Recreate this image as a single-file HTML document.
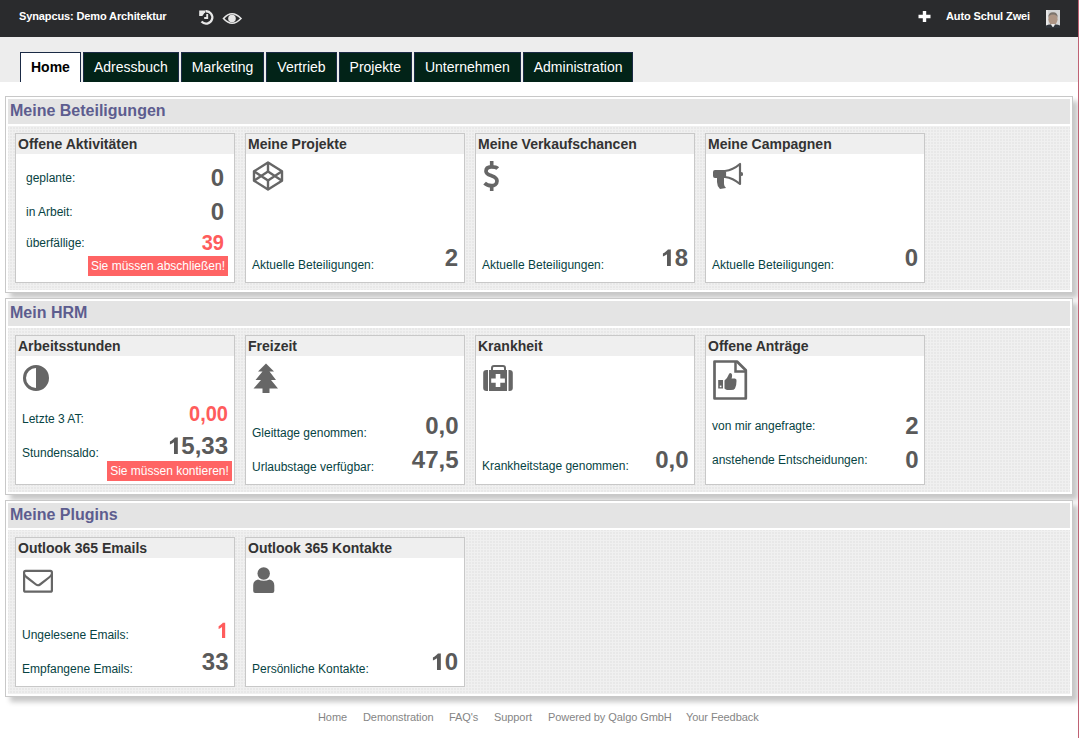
<!DOCTYPE html>
<html><head><meta charset="utf-8"><style>
html,body{margin:0;padding:0;width:1079px;height:738px;overflow:hidden;background:#fff;font-family:"Liberation Sans",sans-serif;}
.t{position:absolute;white-space:nowrap;}
.tabs{position:absolute;left:20px;top:52px;display:flex;}
.tab{box-sizing:border-box;height:30px;border:1px solid #1a2a45;border-bottom:none;background:#022318;color:#fff;font-size:14px;line-height:29px;padding:0 10px;margin-right:2px;white-space:nowrap;}
.tab.act{background:#fff;color:#000;font-weight:bold;}
.one{position:relative;color:transparent;}
.one svg{position:absolute;left:0;top:1px;width:0.556em;height:0.905em;}
.badge{position:absolute;background:#ff6464;color:#fff;font-size:12px;text-align:center;white-space:nowrap;}
</style></head><body>
<div style="position:absolute;left:0px;top:0px;width:1079px;height:37px;background:#2a2b2d"></div>
<div class="t" style="left:19px;top:10.69px;font-size:11px;line-height:11px;font-weight:bold;color:#ffffff;letter-spacing:-0.12px">Synapcus: Demo Architektur</div>
<div class="t" style="left:946px;top:10.69px;font-size:11px;line-height:11px;font-weight:bold;color:#ffffff;letter-spacing:-0.1px">Auto Schul Zwei</div>
<svg style="position:absolute;left:1046px;top:10px" width="14" height="18" viewBox="0 0 14 18">
<rect width="14" height="18" fill="#d6d6d6"/>
<rect x="0" y="0" width="2" height="18" fill="#e8e8e8"/>
<ellipse cx="7" cy="9.3" rx="4.6" ry="5.6" fill="#ae9584"/>
<path d="M2.3 8 Q2 2.2 7 2.2 Q12 2.2 11.7 8 Q11 5 7 4.6 Q3 5 2.3 8Z" fill="#7d746c"/>
<path d="M0 15.5 Q3 14 5 14.5 L7 17 L9 14.5 Q11 14 14 15.5 V18 H0Z" fill="#30343a"/>
<path d="M5 14.6 L7 17.2 L9 14.6 L8 14 H6Z" fill="#ececec"/>
</svg>
<div style="position:absolute;left:0px;top:37px;width:1079px;height:45px;background:#ededed"></div>
<div class="tabs"><div class="tab act">Home</div><div class="tab">Adressbuch</div><div class="tab">Marketing</div><div class="tab">Vertrieb</div><div class="tab">Projekte</div><div class="tab">Unternehmen</div><div class="tab">Administration</div></div>
<div style="position:absolute;left:5px;top:96px;width:1066px;height:195px;border:1px solid #c8c8c8;background:#fff;box-shadow:5px 5px 5px #c8c8c8"></div>
<div style="position:absolute;left:8px;top:99px;width:1062px;height:25px;background:#e4e4e4"></div>
<div class="t" style="left:10px;top:102.96px;font-size:16px;line-height:16px;font-weight:bold;color:#5d5d8f;">Meine Beteiligungen</div>
<div style="position:absolute;left:8px;top:126px;width:1062px;height:164px;background-color:#e8e8e8;background-image:linear-gradient(to right,#f0f0f0 1px,transparent 1px),linear-gradient(to bottom,#f0f0f0 1px,transparent 1px);background-size:3px 3px;background-attachment:fixed"></div>
<div style="position:absolute;left:5px;top:298px;width:1066px;height:195px;border:1px solid #c8c8c8;background:#fff;box-shadow:5px 5px 5px #c8c8c8"></div>
<div style="position:absolute;left:8px;top:301px;width:1062px;height:25px;background:#e4e4e4"></div>
<div class="t" style="left:10px;top:304.96px;font-size:16px;line-height:16px;font-weight:bold;color:#5d5d8f;">Mein HRM</div>
<div style="position:absolute;left:8px;top:328px;width:1062px;height:164px;background-color:#e8e8e8;background-image:linear-gradient(to right,#f0f0f0 1px,transparent 1px),linear-gradient(to bottom,#f0f0f0 1px,transparent 1px);background-size:3px 3px;background-attachment:fixed"></div>
<div style="position:absolute;left:5px;top:500px;width:1066px;height:195px;border:1px solid #c8c8c8;background:#fff;box-shadow:5px 5px 5px #c8c8c8"></div>
<div style="position:absolute;left:8px;top:503px;width:1062px;height:25px;background:#e4e4e4"></div>
<div class="t" style="left:10px;top:506.96px;font-size:16px;line-height:16px;font-weight:bold;color:#5d5d8f;">Meine Plugins</div>
<div style="position:absolute;left:8px;top:530px;width:1062px;height:164px;background-color:#e8e8e8;background-image:linear-gradient(to right,#f0f0f0 1px,transparent 1px),linear-gradient(to bottom,#f0f0f0 1px,transparent 1px);background-size:3px 3px;background-attachment:fixed"></div>
<div style="position:absolute;left:15px;top:133px;width:218px;height:148px;border:1px solid #c8c8c8;background:#fff"></div>
<div style="position:absolute;left:16px;top:134px;width:218px;height:20px;background:#efefef"></div>
<div class="t" style="left:18px;top:137.15px;font-size:14px;line-height:14px;font-weight:bold;color:#333333;">Offene Aktivit&auml;ten</div>
<div style="position:absolute;left:245px;top:133px;width:218px;height:148px;border:1px solid #c8c8c8;background:#fff"></div>
<div style="position:absolute;left:246px;top:134px;width:218px;height:20px;background:#efefef"></div>
<div class="t" style="left:248px;top:137.15px;font-size:14px;line-height:14px;font-weight:bold;color:#333333;">Meine Projekte</div>
<div style="position:absolute;left:475px;top:133px;width:218px;height:148px;border:1px solid #c8c8c8;background:#fff"></div>
<div style="position:absolute;left:476px;top:134px;width:218px;height:20px;background:#efefef"></div>
<div class="t" style="left:478px;top:137.15px;font-size:14px;line-height:14px;font-weight:bold;color:#333333;">Meine Verkaufschancen</div>
<div style="position:absolute;left:705px;top:133px;width:218px;height:148px;border:1px solid #c8c8c8;background:#fff"></div>
<div style="position:absolute;left:706px;top:134px;width:218px;height:20px;background:#efefef"></div>
<div class="t" style="left:708px;top:137.15px;font-size:14px;line-height:14px;font-weight:bold;color:#333333;">Meine Campagnen</div>
<div class="t" style="left:26px;top:171.84px;font-size:12px;line-height:12px;font-weight:normal;color:#074343;">geplante:</div>
<div class="t" style="right:855px;text-align:right;top:165.68px;font-size:24px;line-height:24px;font-weight:bold;color:#5a5a5a;">0</div>
<div class="t" style="left:26px;top:205.84px;font-size:12px;line-height:12px;font-weight:normal;color:#074343;">in Arbeit:</div>
<div class="t" style="right:855px;text-align:right;top:199.68px;font-size:24px;line-height:24px;font-weight:bold;color:#5a5a5a;">0</div>
<div class="t" style="left:26px;top:236.84px;font-size:12px;line-height:12px;font-weight:normal;color:#074343;">&uuml;berf&auml;llige:</div>
<div class="t" style="right:855px;text-align:right;top:233.07px;font-size:20px;line-height:20px;font-weight:bold;color:#ff5c5c;transform:scaleY(1.08);transform-origin:50% 16.93px">39</div>
<div class="badge" style="left:88px;top:256px;width:140px;height:20px;line-height:20px">Sie m&uuml;ssen abschlie&szlig;en!</div>
<div class="t" style="left:252px;top:258.84px;font-size:12px;line-height:12px;font-weight:normal;color:#074343;">Aktuelle Beteiligungen:</div>
<div class="t" style="right:621px;text-align:right;top:245.68px;font-size:24px;line-height:24px;font-weight:bold;color:#5a5a5a;">2</div>
<div class="t" style="left:482px;top:258.84px;font-size:12px;line-height:12px;font-weight:normal;color:#074343;">Aktuelle Beteiligungen:</div>
<div class="t" style="right:391px;text-align:right;top:245.68px;font-size:24px;line-height:24px;font-weight:bold;color:#5a5a5a;"><span class="one">1<svg viewBox="0 -905 556 905" preserveAspectRatio="none"><path d="M410 0 L250 0 L250 -520 Q170 -455 80 -425 L80 -550 Q160 -590 215 -640 Q270 -690 290 -716 L410 -716 Z" fill="#5a5a5a"/></svg></span>8</div>
<div class="t" style="left:712px;top:258.84px;font-size:12px;line-height:12px;font-weight:normal;color:#074343;">Aktuelle Beteiligungen:</div>
<div class="t" style="right:161px;text-align:right;top:245.68px;font-size:24px;line-height:24px;font-weight:bold;color:#5a5a5a;">0</div>
<div style="position:absolute;left:15px;top:335px;width:218px;height:148px;border:1px solid #c8c8c8;background:#fff"></div>
<div style="position:absolute;left:16px;top:336px;width:218px;height:20px;background:#efefef"></div>
<div class="t" style="left:18px;top:339.15px;font-size:14px;line-height:14px;font-weight:bold;color:#333333;">Arbeitsstunden</div>
<div style="position:absolute;left:245px;top:335px;width:218px;height:148px;border:1px solid #c8c8c8;background:#fff"></div>
<div style="position:absolute;left:246px;top:336px;width:218px;height:20px;background:#efefef"></div>
<div class="t" style="left:248px;top:339.15px;font-size:14px;line-height:14px;font-weight:bold;color:#333333;">Freizeit</div>
<div style="position:absolute;left:475px;top:335px;width:218px;height:148px;border:1px solid #c8c8c8;background:#fff"></div>
<div style="position:absolute;left:476px;top:336px;width:218px;height:20px;background:#efefef"></div>
<div class="t" style="left:478px;top:339.15px;font-size:14px;line-height:14px;font-weight:bold;color:#333333;">Krankheit</div>
<div style="position:absolute;left:705px;top:335px;width:218px;height:148px;border:1px solid #c8c8c8;background:#fff"></div>
<div style="position:absolute;left:706px;top:336px;width:218px;height:20px;background:#efefef"></div>
<div class="t" style="left:708px;top:339.15px;font-size:14px;line-height:14px;font-weight:bold;color:#333333;">Offene Antr&auml;ge</div>
<div class="t" style="left:22px;top:412.84px;font-size:12px;line-height:12px;font-weight:normal;color:#074343;">Letzte 3 AT:</div>
<div class="t" style="right:851px;text-align:right;top:404.07px;font-size:20px;line-height:20px;font-weight:bold;color:#ff5c5c;transform:scaleY(1.08);transform-origin:50% 16.93px">0,00</div>
<div class="t" style="left:22px;top:446.84px;font-size:12px;line-height:12px;font-weight:normal;color:#074343;">Stundensaldo:</div>
<div class="t" style="right:851px;text-align:right;top:433.68px;font-size:24px;line-height:24px;font-weight:bold;color:#5a5a5a;"><span class="one">1<svg viewBox="0 -905 556 905" preserveAspectRatio="none"><path d="M410 0 L250 0 L250 -520 Q170 -455 80 -425 L80 -550 Q160 -590 215 -640 Q270 -690 290 -716 L410 -716 Z" fill="#5a5a5a"/></svg></span>5,33</div>
<div class="badge" style="left:107px;top:461px;width:125px;height:20px;line-height:20px">Sie m&uuml;ssen kontieren!</div>
<div class="t" style="left:252px;top:426.84px;font-size:12px;line-height:12px;font-weight:normal;color:#074343;">Gleittage genommen:</div>
<div class="t" style="right:620.5px;text-align:right;top:413.68px;font-size:24px;line-height:24px;font-weight:bold;color:#5a5a5a;">0,0</div>
<div class="t" style="left:252px;top:460.84px;font-size:12px;line-height:12px;font-weight:normal;color:#074343;">Urlaubstage verf&uuml;gbar:</div>
<div class="t" style="right:620.5px;text-align:right;top:447.68px;font-size:24px;line-height:24px;font-weight:bold;color:#5a5a5a;">47,5</div>
<div class="t" style="left:482px;top:460.34px;font-size:12px;line-height:12px;font-weight:normal;color:#074343;">Krankheitstage genommen:</div>
<div class="t" style="right:390.5px;text-align:right;top:447.68px;font-size:24px;line-height:24px;font-weight:bold;color:#5a5a5a;">0,0</div>
<div class="t" style="left:712px;top:419.84px;font-size:12px;line-height:12px;font-weight:normal;color:#074343;">von mir angefragte:</div>
<div class="t" style="right:160.5px;text-align:right;top:413.68px;font-size:24px;line-height:24px;font-weight:bold;color:#5a5a5a;">2</div>
<div class="t" style="left:712px;top:453.84px;font-size:12px;line-height:12px;font-weight:normal;color:#074343;">anstehende Entscheidungen:</div>
<div class="t" style="right:160.5px;text-align:right;top:447.68px;font-size:24px;line-height:24px;font-weight:bold;color:#5a5a5a;">0</div>
<div style="position:absolute;left:15px;top:537px;width:218px;height:148px;border:1px solid #c8c8c8;background:#fff"></div>
<div style="position:absolute;left:16px;top:538px;width:218px;height:20px;background:#efefef"></div>
<div class="t" style="left:18px;top:541.15px;font-size:14px;line-height:14px;font-weight:bold;color:#333333;">Outlook 365 Emails</div>
<div style="position:absolute;left:245px;top:537px;width:218px;height:148px;border:1px solid #c8c8c8;background:#fff"></div>
<div style="position:absolute;left:246px;top:538px;width:218px;height:20px;background:#efefef"></div>
<div class="t" style="left:248px;top:541.15px;font-size:14px;line-height:14px;font-weight:bold;color:#333333;">Outlook 365 Kontakte</div>
<div class="t" style="left:22px;top:628.84px;font-size:12px;line-height:12px;font-weight:normal;color:#074343;">Ungelesene Emails:</div>
<div class="t" style="right:850.5px;text-align:right;top:619.57px;font-size:20px;line-height:20px;font-weight:bold;color:#ff5c5c;transform:scaleY(1.08);transform-origin:50% 16.93px"><span class="one">1<svg viewBox="0 -905 556 905" preserveAspectRatio="none"><path d="M410 0 L250 0 L250 -520 Q170 -455 80 -425 L80 -550 Q160 -590 215 -640 Q270 -690 290 -716 L410 -716 Z" fill="#ff5c5c"/></svg></span></div>
<div class="t" style="left:22px;top:662.84px;font-size:12px;line-height:12px;font-weight:normal;color:#074343;">Empfangene Emails:</div>
<div class="t" style="right:850.5px;text-align:right;top:649.68px;font-size:24px;line-height:24px;font-weight:bold;color:#5a5a5a;">33</div>
<div class="t" style="left:252px;top:662.84px;font-size:12px;line-height:12px;font-weight:normal;color:#074343;">Pers&ouml;nliche Kontakte:</div>
<div class="t" style="right:621px;text-align:right;top:649.68px;font-size:24px;line-height:24px;font-weight:bold;color:#5a5a5a;"><span class="one">1<svg viewBox="0 -905 556 905" preserveAspectRatio="none"><path d="M410 0 L250 0 L250 -520 Q170 -455 80 -425 L80 -550 Q160 -590 215 -640 Q270 -690 290 -716 L410 -716 Z" fill="#5a5a5a"/></svg></span>0</div>
<div class="t" style="left:318px;top:711.69px;font-size:11px;line-height:11px;font-weight:normal;color:#858585;letter-spacing:-0.08px">Home</div>
<div class="t" style="left:363px;top:711.69px;font-size:11px;line-height:11px;font-weight:normal;color:#858585;letter-spacing:-0.08px">Demonstration</div>
<div class="t" style="left:449px;top:711.69px;font-size:11px;line-height:11px;font-weight:normal;color:#858585;letter-spacing:-0.08px">FAQ's</div>
<div class="t" style="left:494px;top:711.69px;font-size:11px;line-height:11px;font-weight:normal;color:#858585;letter-spacing:-0.08px">Support</div>
<div class="t" style="left:548px;top:711.69px;font-size:11px;line-height:11px;font-weight:normal;color:#858585;letter-spacing:-0.08px">Powered by Qalgo GmbH</div>
<div class="t" style="left:686px;top:711.69px;font-size:11px;line-height:11px;font-weight:normal;color:#858585;letter-spacing:-0.08px">Your Feedback</div>
<div style="position:absolute;left:1078px;top:0px;width:1px;height:738px;background:#c06274"></div>
<svg style="position:absolute;left:0;top:0" width="1079" height="738" viewBox="0 0 1079 738">
<!-- history -->
<path d="M205.4 11.3 A6.2 6.2 0 1 1 201.5 21.6" fill="none" stroke="#e8e8e8" stroke-width="2.3"/>
<path d="M199.2 10.5 H205 V12.3 L202.3 15.9 H199.2Z" fill="#e8e8e8"/>
<path d="M207.2 14 V18 H204.2" fill="none" stroke="#e8e8e8" stroke-width="1.9"/>
<!-- eye -->
<path d="M223.5 18.5 Q232 9 241 18.5 Q232 28 223.5 18.5Z" fill="none" stroke="#e6e6e6" stroke-width="1.6"/>
<circle cx="232" cy="18.5" r="3.8" fill="#e6e6e6"/>
<!-- plus -->
<path d="M922.8 11 H926.2 V14.8 H930.5 V18.2 H926.2 V22 H922.8 V18.2 H918.5 V14.8 H922.8Z" fill="#ffffff"/>
<!-- codepen -->
<g fill="none" stroke="#666666" stroke-width="2.4" stroke-linejoin="round">
<path d="M268 162.5 L282 171.3 L282 180.7 L268 189.5 L254 180.7 L254 171.3Z"/>
<path d="M268 162.5 V171.5 M268 180.5 V189.5"/>
<path d="M254 171.3 L268 180.5 L282 171.3 M254 180.7 L268 171.5 L282 180.7"/>
</g>
<!-- dollar -->
<path d="M497.8 168.6 C496.3 167 494 166.8 491.3 166.8 C488 166.8 486 168.5 486 171.2 C486 174 489.5 175 491.5 175.7 C494.5 176.7 497 178 497 181 C497 184 494.5 185.7 491.3 185.7 C488.5 185.7 486.3 184.8 484.6 183.1" fill="none" stroke="#666666" stroke-width="3.7"/>
<rect x="489.9" y="161" width="3.6" height="5" fill="#666666"/>
<rect x="489.9" y="186" width="3.6" height="5" fill="#666666"/>
<!-- megaphone -->
<path d="M713 172 Q713 170 715 170 L725 170 L725 178 L724 178 L724 184 Q724 186 726 188 L720 189 Q717 186 717 182 L717 178 L715 178 Q713 178 713 176Z" fill="#666666"/>
<path d="M725 171 Q733 170 740 164 L740 184 Q733 178 725 177Z" fill="none" stroke="#666666" stroke-width="2.2" stroke-linejoin="round"/>
<rect x="740" y="172" width="3" height="4" rx="1.5" fill="#666666"/>
<!-- half circle -->
<circle cx="36" cy="378" r="11.5" fill="none" stroke="#666666" stroke-width="3"/>
<path d="M36 366.5 A11.5 11.5 0 0 1 36 389.5Z" fill="#666666"/>
<!-- tree -->
<path transform="translate(0,0.6)" d="M266 363 L274 371 L269.5 371 L276 379.5 L271 379.5 L278 388 L269.5 388 L269.5 392.5 L262.5 392.5 L262.5 388 L253.5 388 L261 379.5 L255.5 379.5 L262.5 371 L258 371Z" fill="#666666"/>
<!-- medkit -->
<path d="M486.5 370 L488 370 L488 391 L486.5 391 Q483.2 391 483.2 388 L483.2 373 Q483.2 370 486.5 370Z" fill="#666666"/>
<path d="M509.5 370 L508.5 370 L508.5 391 L509.5 391 Q512.8 391 512.8 388 L512.8 373 Q512.8 370 509.5 370Z" fill="#666666"/>
<path d="M489 370 H507 V391 H489Z M495.7 374 V378.5 H491.2 V382.7 H495.7 V387 H500.3 V382.7 H504.9 V378.5 H500.3 V374Z" fill="#666666" fill-rule="evenodd"/>
<path d="M492 370 V368 Q492 366 494 366 H503 Q505 366 505 368 V370" fill="none" stroke="#666666" stroke-width="2"/>
<!-- file thumbs up -->
<path d="M714.5 361.5 H737 L745.8 370.3 V398.5 H714.5Z" fill="none" stroke="#666666" stroke-width="2.7" stroke-linejoin="round"/>
<path d="M735.5 362 V371.5 H745.5" fill="none" stroke="#666666" stroke-width="2.5"/>
<rect x="718.2" y="380" width="4.8" height="8.5" fill="#666666"/>
<rect x="719.8" y="385.6" width="1.6" height="1.6" fill="#fff"/>
<path d="M724.5 380.5 Q727.5 378 728.5 375 Q729 373 730.5 373 Q732.5 373.5 732 377 L731.5 378.5 L735 378.5 Q737 379 736.5 381 Q736.5 386 735 388.5 Q734 390 731 390 L727 390 Q725 389 724.5 388.5Z" fill="#666666"/>
<!-- envelope -->
<rect x="24.1" y="570.9" width="27.8" height="20.8" rx="1.5" fill="none" stroke="#666666" stroke-width="2.2"/>
<path d="M24.5 574.5 Q25 576 27 577.5 L36 584.5 Q38 586 40 584.5 L49 577.5 Q51 576 51.5 574.5" fill="none" stroke="#666666" stroke-width="2.2"/>
<!-- user -->
<circle cx="263.7" cy="573.5" r="6.2" fill="#666666"/>
<path d="M258 579.5 Q263.7 582 269.5 579.5 Q274.3 580.5 274.3 585.5 V591 Q274.3 593 272.3 593 H255.2 Q253.2 593 253.2 591 V585.5 Q253.2 580.5 258 579.5Z" fill="#666666"/>
</svg>
</body></html>
